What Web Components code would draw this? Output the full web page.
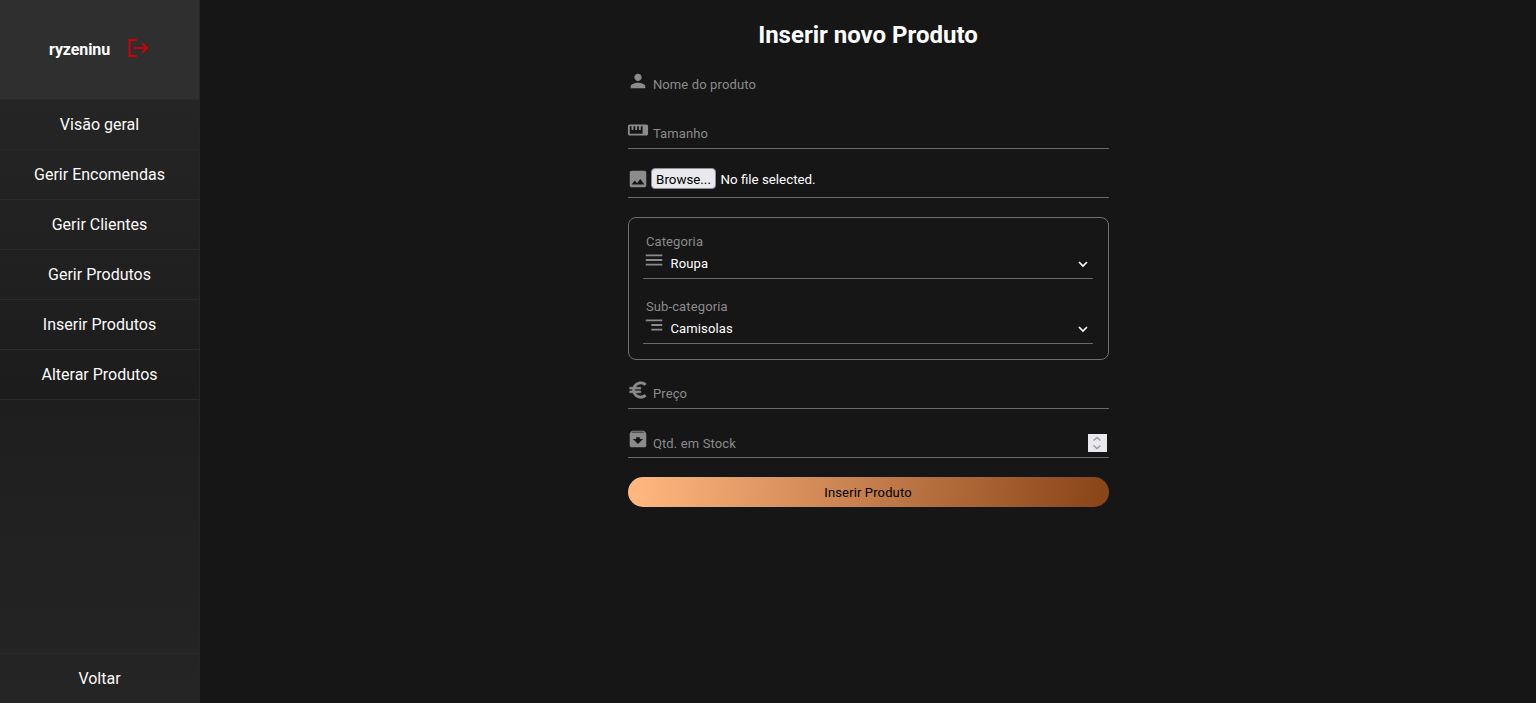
<!DOCTYPE html>
<html lang="pt">
<head>
<meta charset="utf-8">
<title>Inserir novo Produto</title>
<style>
html, body { margin: 0; height: 100%; background: #161616; font-family: Roboto, "Liberation Sans", sans-serif; }
</style>
</head>
<body>
<app-shell>
    <side-bar slot="side" user="ryzeninu">
        <nav-item>Visão geral</nav-item>
        <nav-item>Gerir Encomendas</nav-item>
        <nav-item>Gerir Clientes</nav-item>
        <nav-item>Gerir Produtos</nav-item>
        <nav-item>Inserir Produtos</nav-item>
        <nav-item>Alterar Produtos</nav-item>
        <nav-item slot="bottom" class="last">Voltar</nav-item>
    </side-bar>
    <product-form>
        <form-field icon="person" label="Nome do produto" class="no-line"></form-field>
        <form-field icon="ruler" label="Tamanho"></form-field>
        <file-field></file-field>
        <select-box>
            <select-field icon="menu" label="Categoria" value="Roupa"></select-field>
            <select-field icon="sort" label="Sub-categoria" value="Camisolas"></select-field>
        </select-box>
        <form-field icon="euro" label="Preço"></form-field>
        <form-field icon="archive" label="Qtd. em Stock" spinner></form-field>
        <submit-button>Inserir Produto</submit-button>
    </product-form>
</app-shell>

<script>
const ICONS = {
    person: '<path d="M12 12c2.21 0 4-1.79 4-4s-1.79-4-4-4-4 1.79-4 4 1.79 4 4 4zm0 2c-2.67 0-8 1.34-8 4v2h16v-2c0-2.66-5.33-4-8-4z"/>',
    ruler: '<path d="M21 6H3c-1.1 0-2 .9-2 2v8c0 1.1.9 2 2 2h18c1.1 0 2-.9 2-2V8c0-1.1-.9-2-2-2zm0 10H3V8h2v4h2V8h2v4h2V8h2v4h2V8h2v8z"/>',
    image: '<path d="M21 19V5c0-1.1-.9-2-2-2H5c-1.1 0-2 .9-2 2v14c0 1.1.9 2 2 2h14c1.1 0 2-.9 2-2zM8.5 13.5l2.5 3.01L14.5 12l4.5 6H5l3.5-4.5z"/>',
    menu: '<path d="M3 18h18v-2H3v2zm0-5h18v-2H3v2zm0-7v2h18V6H3z"/>',
    sort: '<path d="M3 6v2h18V6H3zm6 5v2h12v-2H9zm0 5v2h12v-2H9z"/>',
    euro: '<path stroke="currentColor" stroke-width=".7" d="M15 18.500c-2.510 0-4.680-1.420-5.760-3.500H15v-2H8.580c-.05-.33-.08-.66-.08-1s.03-.67.08-1H15V9H9.240C10.320 6.920 12.500 5.500 15 5.500c1.610 0 3.090.59 4.230 1.570L21 5.300C19.410 3.870 17.300 3 15 3c-3.920 0-7.240 2.510-8.480 6H3v2h3.060c-.04.33-.06.66-.06 1s.02.67.06 1H3v2h3.520c1.240 3.490 4.560 6 8.480 6 2.310 0 4.410-.87 6-2.300l-1.780-1.770c-1.130.98-2.600 1.570-4.220 1.570z"/>',
    archive: '<path d="M20.540 5.230l-1.390-1.680C18.880 3.210 18.470 3 18 3H6c-.47 0-.88.21-1.160.55L3.460 5.230C3.170 5.570 3 6.020 3 6.500V19c0 1.100.9 2 2 2h14c1.100 0 2-.9 2-2V6.500c0-.48-.17-.93-.46-1.270zM12 17.500L6.500 12H10v-2h4v2h3.500L12 17.500zM5.120 5l.81-1h12l.94 1H5.120z"/>'
};

function icon(name, size) {
    return `<svg class="ic" width="${size}" height="${size}" viewBox="0 0 24 24" fill="currentColor">${ICONS[name]}</svg>`;
}

class AppShell extends HTMLElement {
    constructor() {
        super();
        this.attachShadow({ mode: 'open' }).innerHTML = `
<style>
:host { display: flex; height: 703px; background: #161616; overflow: hidden; }
main { flex: 1; min-width: 0; }
</style>
<slot name="side"></slot>
<main><slot></slot></main>`;
    }
}

class SideBar extends HTMLElement {
    constructor() {
        super();
        this.attachShadow({ mode: 'open' }).innerHTML = `
<style>
:host {
    display: flex;
    flex-direction: column;
    width: 200px;
    height: 100%;
    flex: none;
    box-sizing: border-box;
    border-right: 1px solid #262626;
    background: linear-gradient(#1e1e1e 400px, #252525);
    color: #fff;
}
header {
    height: 100px;
    box-sizing: border-box;
    display: flex;
    align-items: center;
    padding: 0 0 0 49px;
    gap: 16.500px;
    background: #2f2f2f;
    border-bottom: 1px solid #2b2b2b;
    font-size: 16px;
    font-weight: 700;
    letter-spacing: -.1px;
}
svg { display: block; margin-top: -3px; }
nav { background: linear-gradient(#252525, #1c1c1c); }
.bottom { margin-top: auto; }
</style>
<header>
    <span>${this.getAttribute('user')}</span>
    <svg width="22" height="20" viewBox="0 0 22 20" fill="none" stroke="#d0000a" stroke-width="2">
        <path d="M10 2H2.500v16H10"/>
        <path d="M7 10h13M15.500 5.500 20 10l-4.500 4.500"/>
    </svg>
</header>
<nav><slot></slot></nav>
<div class="bottom"><slot name="bottom"></slot></div>`;
    }
}

class NavItem extends HTMLElement {
    constructor() {
        super();
        this.attachShadow({ mode: 'open' }).innerHTML = `
<style>
:host {
    display: flex;
    align-items: center;
    justify-content: center;
    height: 50px;
    box-sizing: border-box;
    border-bottom: 1px solid #2a2a2a;
    font-size: 16px;
    color: #fafafa;
}
:host(.last) { border-bottom: 0; border-top: 1px solid #2a2a2a; }
</style>
<slot></slot>`;
    }
}

class ProductForm extends HTMLElement {
    constructor() {
        super();
        this.attachShadow({ mode: 'open' }).innerHTML = `
<style>
:host { display: block; width: 481px; margin: 0 auto; color: #fff; }
h1 { margin: 0; height: 51px; padding-top: 21px; box-sizing: border-box; font-size: 24px; line-height: 28px; font-weight: 700; text-align: center; }
</style>
<h1>Inserir novo Produto</h1>
<slot></slot>`;
    }
}

class FormField extends HTMLElement {
    constructor() {
        super();
        const spinner = this.hasAttribute('spinner') ? `
    <span class="spin">
        <svg width="10" height="16" viewBox="0 0 10 16" fill="none" stroke="#9b9bab" stroke-width="1.500">
            <path d="M1.500 5.500 5 2.500l3.500 3M1.500 10.500 5 13.500l3.500-3"/>
        </svg>
    </span>` : '';
        this.attachShadow({ mode: 'open' }).innerHTML = `
<style>
:host {
    display: flex;
    align-items: center;
    height: 49px;
    box-sizing: border-box;
    padding-top: 18px;
    border-bottom: 1px solid #6a6a6a;
    color: #8b8b8b;
    font-size: 13px;
}
:host(.no-line) { border-bottom-color: transparent; }
:host([spinner]) { padding-top: 20px; }
:host([spinner]) svg.ic { margin-top: -8px; }
svg.ic { display: block; flex: none; margin: -6px 4px 0 -1px; color: #8b8b8b; }
.text { flex: 1; line-height: 15px; letter-spacing: .13px; padding-left: .4px; }
.spin { display: flex; align-items: center; justify-content: center; width: 19px; height: 18px; margin: 0 2px 0 0; background: #e9e9ed; }
</style>
${icon(this.getAttribute('icon'), 22)}
<span class="text">${this.getAttribute('label')}</span>${spinner}`;
    }
}

class FileField extends HTMLElement {
    constructor() {
        super();
        this.attachShadow({ mode: 'open' }).innerHTML = `
<style>
:host {
    display: flex;
    align-items: center;
    height: 49px;
    box-sizing: border-box;
    padding-top: 12px;
    border-bottom: 1px solid #6a6a6a;
    color: #fff;
    font-size: 13.333px;
}
svg.ic { display: block; flex: none; margin: -1px 2px 0 -1px; color: #8b8b8b; }
button {
    width: 65px;
    height: 21px;
    padding: 1px 0 0 1px;
    margin: -1px 5px 0 0;
    background: #e9e9ed;
    border: 1px solid #8f8f9d;
    border-radius: 4px;
    color: #000;
    font: inherit;
}
</style>
${icon('image', 22)}
<button type="button">Browse...</button>
<span>No file selected.</span>`;
    }
}

class SelectBox extends HTMLElement {
    constructor() {
        super();
        this.attachShadow({ mode: 'open' }).innerHTML = `
<style>
:host {
    display: flex;
    flex-direction: column;
    gap: 15px;
    height: 143px;
    box-sizing: border-box;
    margin-top: 19px;
    padding: 11px 15px 15px 14px;
    border: 1px solid #6e6e6e;
    border-radius: 8px;
}
</style>
<slot></slot>`;
    }
}

class SelectField extends HTMLElement {
    constructor() {
        super();
        this.attachShadow({ mode: 'open' }).innerHTML = `
<style>
:host {
    display: block;
    height: 50px;
    box-sizing: border-box;
    border-bottom: 1px solid #6a6a6a;
    font-size: 13px;
}
label { display: block; height: 15px; margin-top: 5px; padding-left: 3.400px; line-height: 15px; color: #8b8b8b; letter-spacing: .13px; }
.row { display: flex; align-items: center; height: 29px; color: #fff; }
svg.ic { display: block; flex: none; margin: -8px 6px 0 0; color: #8b8b8b; }
.value { flex: 1; letter-spacing: .13px; margin-top: -1px; }
svg.chev { display: block; margin-right: 4px; padding-top: 1px; }
</style>
<label>${this.getAttribute('label')}</label>
<div class="row">
    ${icon(this.getAttribute('icon'), 22)}
    <span class="value">${this.getAttribute('value')}</span>
    <svg class="chev" width="12" height="8" viewBox="0 0 12 8" fill="none" stroke="#fff" stroke-width="1.700"><path d="M2 2l4 4 4-4"/></svg>
</div>`;
    }
}

class SubmitButton extends HTMLElement {
    constructor() {
        super();
        this.attachShadow({ mode: 'open' }).innerHTML = `
<style>
:host { display: block; margin-top: 19px; }
button {
    display: block;
    width: 100%;
    height: 30px;
    padding: 0;
    border: none;
    border-radius: 15px;
    background: linear-gradient(95deg, #ffb77f 2%, #8a4519 98%);
    color: #000;
    font: 13px Roboto, "Liberation Sans", sans-serif;
    letter-spacing: .13px;
}
</style>
<button type="button"><slot></slot></button>`;
    }
}

customElements.define('app-shell', AppShell);
customElements.define('side-bar', SideBar);
customElements.define('nav-item', NavItem);
customElements.define('product-form', ProductForm);
customElements.define('form-field', FormField);
customElements.define('file-field', FileField);
customElements.define('select-box', SelectBox);
customElements.define('select-field', SelectField);
customElements.define('submit-button', SubmitButton);
</script>
</body>
</html>
